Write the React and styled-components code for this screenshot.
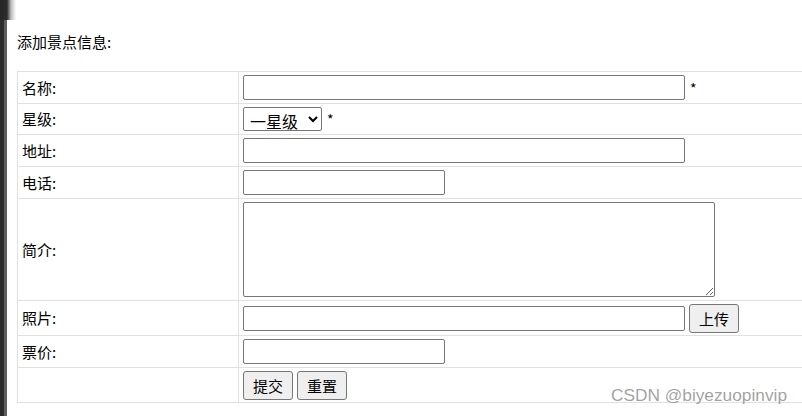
import React from 'react';
import styled, { createGlobalStyle } from 'styled-components';

const GlobalStyle = createGlobalStyle`
	html, body {
		margin: 0;
		padding: 0;
		background: #fff;
		overflow: hidden;
	}
	body {
		font-family: "Noto Sans CJK SC", "Noto Sans", "Liberation Sans", sans-serif;
		color: #000;
	}
`;

const Page = styled.div`
	position: relative;
	display: flex;
	width: 802px;
	height: 416px;
	overflow: hidden;
`;

const EditorEdge = styled.div`
	position: relative;
	flex: 0 0 7px;
	background: linear-gradient(to right, #2c2c2c 0 4px, #5f5f5f 4px 7px);
`;

const EdgeCap = styled.div`
	position: absolute;
	top: 0;
	left: 0;
	width: 16px;
	height: 20px;
	background: linear-gradient(to right, #262626 0, #2c2c2c 7px, rgba(60, 60, 60, 0.35) 11px, rgba(255, 255, 255, 0) 16px);
`;

const Main = styled.div`
	flex: 1;
	padding: 31px 0 0 10px;
	overflow: hidden;
`;

const Title = styled.div`
	font-size: 15px;
	line-height: 22px;
	height: 22px;
	margin-bottom: 18px;
`;

const FormTable = styled.table`
	width: 820px;
	border-collapse: collapse;
	font-size: 15px;
`;

const Cell = styled.td`
	border: 1px solid #e0e0e0;
	padding: 0 4px;
	height: ${(p) => p.$h - 1}px;
	line-height: 16px;
	vertical-align: middle;
	white-space: nowrap;
`;

const LabelCell = styled(Cell)`
	width: 212px;
`;

const Field = styled.input`
	box-sizing: border-box;
	width: ${(p) => p.$w}px;
	height: 25px;
	margin: 0;
	padding: 1px 2px;
	border: 1px solid #767676;
	border-radius: 2px;
	font-size: 15px;
	font-family: inherit;
	vertical-align: middle;
	background: #fff;
`;

const Area = styled.textarea`
	box-sizing: border-box;
	display: inline-block;
	width: 472px;
	height: 95px;
	margin: 0;
	border: 1px solid #767676;
	border-radius: 2px;
	vertical-align: middle;
	font-family: inherit;
`;

const Picker = styled.select`
	box-sizing: border-box;
	width: 79px;
	height: 24px;
	margin: 0;
	padding: 0 0 0 2px;
	border: 1px solid #767676;
	border-radius: 2px;
	font-size: 16px;
	font-family: inherit;
	color: #000;
	background: #fff;
	vertical-align: middle;
`;

const Btn = styled.button`
	box-sizing: border-box;
	width: 50px;
	height: 29px;
	margin: 0 ${(p) => (p.$gap ? 4 : 0)}px 0 ${(p) => (p.$lead ? 4 : 0)}px;
	padding: 0;
	border: 1px solid #767676;
	border-radius: 3px;
	background: #efefef;
	font-size: 15px;
	font-family: inherit;
	color: #000;
	vertical-align: middle;
`;

const Star = styled.span`
	font-size: 14px;
	margin-left: 5px;
	vertical-align: middle;
`;

const Watermark = styled.div`
	position: absolute;
	right: 15px;
	bottom: 10px;
	font-family: "Liberation Sans", Arial, sans-serif;
	font-size: 17.3px;
	color: rgba(125, 125, 125, 0.72);
`;

const App = () => {
	return (
		<Page>
			<GlobalStyle />
			<EditorEdge>
				<EdgeCap />
			</EditorEdge>
			<Main>
				<Title>添加景点信息:</Title>
				<form autoComplete="off" onSubmit={(e) => e.preventDefault()}>
					<FormTable>
						<tbody>
							<tr>
								<LabelCell $h={32}>名称:</LabelCell>
								<Cell $h={32}>
									<Field type="text" $w={442} />
									<Star>*</Star>
								</Cell>
							</tr>
							<tr>
								<LabelCell $h={31}>星级:</LabelCell>
								<Cell $h={31}>
									<Picker defaultValue="1">
										<option value="1">一星级</option>
										<option value="2">二星级</option>
										<option value="3">三星级</option>
										<option value="4">四星级</option>
										<option value="5">五星级</option>
									</Picker>
									<Star>*</Star>
								</Cell>
							</tr>
							<tr>
								<LabelCell $h={32}>地址:</LabelCell>
								<Cell $h={32}>
									<Field type="text" $w={442} />
								</Cell>
							</tr>
							<tr>
								<LabelCell $h={32}>电话:</LabelCell>
								<Cell $h={32}>
									<Field type="text" $w={202} />
								</Cell>
							</tr>
							<tr>
								<LabelCell $h={102}>简介:</LabelCell>
								<Cell $h={102}>
									<Area />
								</Cell>
							</tr>
							<tr>
								<LabelCell $h={35}>照片:</LabelCell>
								<Cell $h={35}>
									<Field type="text" $w={442} />
									<Btn type="button" $lead>上传</Btn>
								</Cell>
							</tr>
							<tr>
								<LabelCell $h={32}>票价:</LabelCell>
								<Cell $h={32}>
									<Field type="text" $w={202} />
								</Cell>
							</tr>
							<tr>
								<LabelCell $h={35}></LabelCell>
								<Cell $h={35}>
									<Btn type="submit" $gap>提交</Btn>
									<Btn type="reset">重置</Btn>
								</Cell>
							</tr>
						</tbody>
					</FormTable>
				</form>
			</Main>
			<Watermark>CSDN @biyezuopinvip</Watermark>
		</Page>
	);
};

export default App;
